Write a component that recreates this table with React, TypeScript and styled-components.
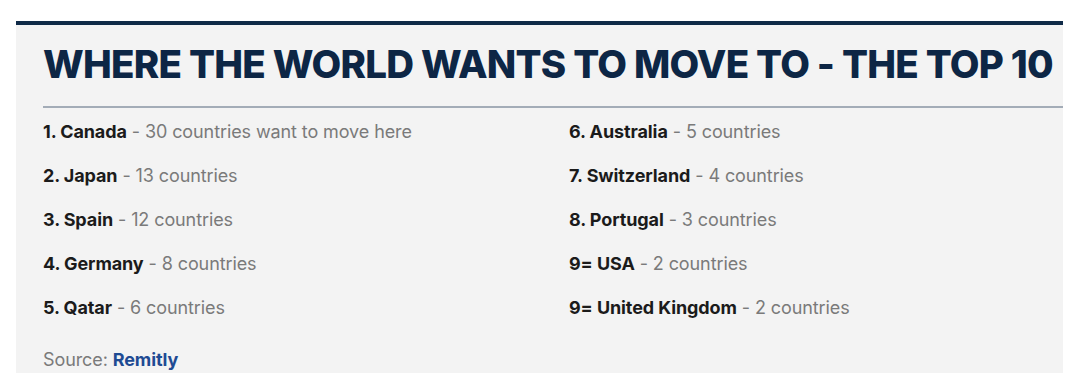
import React from "react";
import styled, { createGlobalStyle } from "styled-components";

const GlobalStyle = createGlobalStyle`
  body {
    margin: 0;
    background: #ffffff;
    font-family: "Inter", "Liberation Sans", sans-serif;
  }
`;

const Page = styled.div`
  padding: 21px 17px 0 16px;
  height: 385px;
  box-sizing: border-box;
`;

const Panel = styled.section`
  background: #f3f3f3;
  border-top: 4px solid #0f2a47;
  height: 352px;
  box-sizing: border-box;
  padding: 0 0 0 27px;
`;

const Title = styled.h2`
  margin: 0;
  padding-top: 14px;
  font-family: "Inter", "Liberation Sans", sans-serif;
  font-weight: 800;
  font-size: 38.5px;
  line-height: 50px;
  color: #0d2645;
  white-space: nowrap;
  letter-spacing: -0.75px;
`;

const Divider = styled.hr`
  margin: 17px 0 0 0;
  border: 0;
  border-top: 2px solid #a3acb7;
`;

const Grid = styled.div`
  display: grid;
  grid-template-columns: 526px 1fr;
  grid-auto-flow: column;
  grid-template-rows: repeat(5, 44px);
  padding-top: 13px;
`;

const Item = styled.div`
  font-size: 18px;
  line-height: 22px;
  color: #7a7a7a;
  letter-spacing: -0.1px;
`;

const Name = styled.strong`
  font-weight: 700;
  color: #1b1b1b;
`;

const Source = styled.div`
  margin-top: 8px;
  font-size: 18px;
  line-height: 22px;
  color: #7a7a7a;
  letter-spacing: -0.1px;
`;

const SourceLink = styled.span`
  color: #1e4b93;
  font-weight: 700;
`;

type Entry = {
  rank: string;
  country: string;
  note: string;
};

const entries: Entry[] = [
  { rank: "1.", country: "Canada", note: "30 countries want to move here" },
  { rank: "2.", country: "Japan", note: "13 countries" },
  { rank: "3.", country: "Spain", note: "12 countries" },
  { rank: "4.", country: "Germany", note: "8 countries" },
  { rank: "5.", country: "Qatar", note: "6 countries" },
  { rank: "6.", country: "Australia", note: "5 countries" },
  { rank: "7.", country: "Switzerland", note: "4 countries" },
  { rank: "8.", country: "Portugal", note: "3 countries" },
  { rank: "9=", country: "USA", note: "2 countries" },
  { rank: "9=", country: "United Kingdom", note: "2 countries" },
];

const App: React.FC = () => {
  return (
    <>
      <GlobalStyle />
      <Page>
        <Panel>
          <Title>WHERE THE WORLD WANTS TO MOVE TO - THE TOP 10</Title>
          <Divider />
          <Grid>
            {entries.map((e, i) => (
              <Item key={`${i}`}>
                <Name>
                  {e.rank} {e.country}
                </Name>{" "}
                - {e.note}
              </Item>
            ))}
          </Grid>
          <Source>
            Source: <SourceLink>Remitly</SourceLink>
          </Source>
        </Panel>
      </Page>
    </>
  );
};

export default App;
